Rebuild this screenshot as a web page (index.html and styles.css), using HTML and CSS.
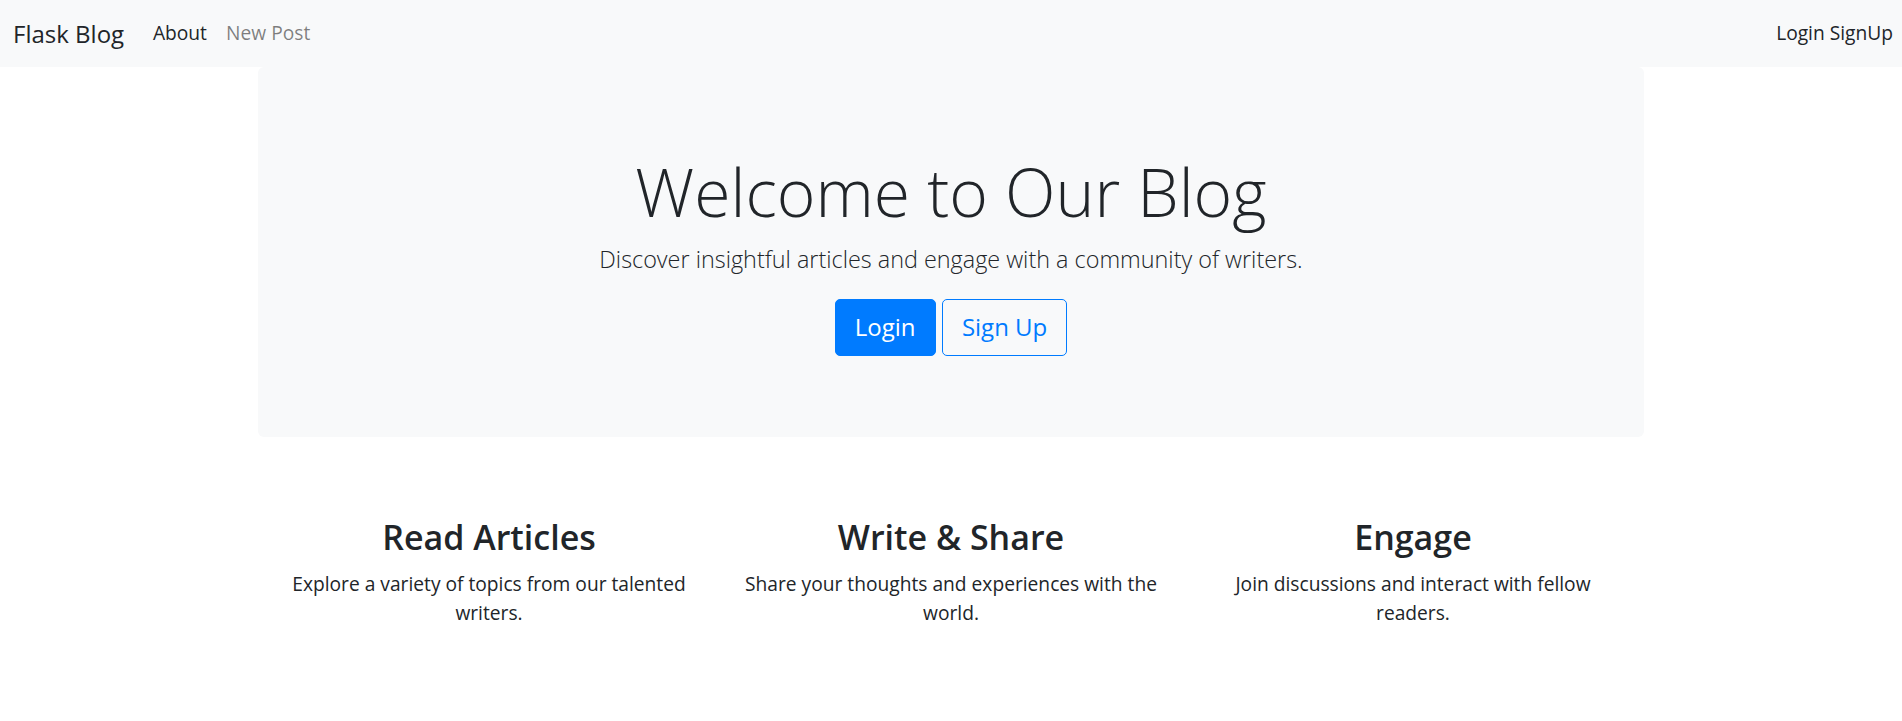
FILE: index.html
```html
<!DOCTYPE html>
<html lang="en">
<head>
<meta charset="utf-8">
<title>Flask Blog</title>
<link rel="stylesheet" href="styles.css">
</head>
<body>
<nav class="navbar">
  <a class="brand" href="#">Flask Blog</a>
  <ul class="nav-links">
    <li><a class="nav-link" href="#">About</a></li>
    <li><a class="nav-link muted" href="#">New Post</a></li>
  </ul>
  <div class="nav-right">
    <a class="nav-link plain" href="#">Login</a>
    <a class="nav-link plain" href="#">SignUp</a>
  </div>
</nav>
<main class="container">
  <section class="jumbotron">
    <h1 class="display">Welcome to Our Blog</h1>
    <p class="lead">Discover insightful articles and engage with a community of writers.</p>
    <div class="actions">
      <a class="btn btn-primary" href="#">Login</a>
      <a class="btn btn-outline" href="#">Sign Up</a>
    </div>
  </section>
  <section class="features">
    <div class="feature">
      <h2>Read Articles</h2>
      <p>Explore a variety of topics from our talented writers.</p>
    </div>
    <div class="feature">
      <h2>Write &amp; Share</h2>
      <p>Share your thoughts and experiences with the world.</p>
    </div>
    <div class="feature">
      <h2>Engage</h2>
      <p>Join discussions and interact with fellow readers.</p>
    </div>
  </section>
</main>
</body>
</html>
```
FILE: styles.css
```css
* { box-sizing: border-box; }
body {
  margin: 0;
  font-family: "Open Sans", "Noto Sans", sans-serif;
  color: #212529;
  background: #fff;
  font-size: 19.2px;
  line-height: 1.5;
}
a { text-decoration: none; color: inherit; }

.navbar {
  height: 67px;
  background: #f8f9fa;
  display: flex;
  align-items: center;
  padding: 0 9px 0 13px;
}
.brand {
  font-size: 24px;
  line-height: 36px;
  color: #212529;
  margin-right: 19.2px;
}
.nav-links {
  list-style: none;
  display: flex;
  margin: 0;
  padding: 0;
}
.nav-link {
  display: block;
  padding: 0 9.6px;
  font-size: 19.2px;
  color: #212529;
}
.nav-link.muted { color: rgba(0,0,0,.5); }
.nav-right {
  margin-left: auto;
  display: flex;
  gap: 5px;
}
.nav-link.plain { padding: 0; }

.container {
  width: 1386px;
  margin: 0 auto;
}
.jumbotron {
  background: #f8f9fa;
  border-radius: 6px;
  padding: 84px 32px 81px;
  text-align: center;
}
.display {
  font-size: 66px;
  font-weight: 300;
  line-height: 80px;
  margin: 0 0 9.7px;
}
.lead {
  font-size: 23.4px;
  font-weight: 300;
  line-height: 36px;
  margin: 0 0 22px;
}
.actions {
  display: flex;
  justify-content: center;
  gap: 6px;
}
.btn {
  display: inline-block;
  font-size: 24px;
  line-height: 36px;
  padding: 9.6px 19.2px;
  border: 1.2px solid #007bff;
  border-radius: 5px;
}
.btn-primary { background: #007bff; color: #fff; }
.btn-outline { background: transparent; color: #007bff; }

.features {
  display: grid;
  grid-template-columns: repeat(3, 1fr);
  margin-top: 79px;
  text-align: center;
}
.feature { padding: 0 18px; }
.feature h2 {
  font-size: 34px;
  font-weight: 600;
  line-height: 43.2px;
  margin: 0 0 11px;
}
.feature p {
  margin: 0;
  font-size: 19.2px;
  line-height: 28.8px;
}
```
